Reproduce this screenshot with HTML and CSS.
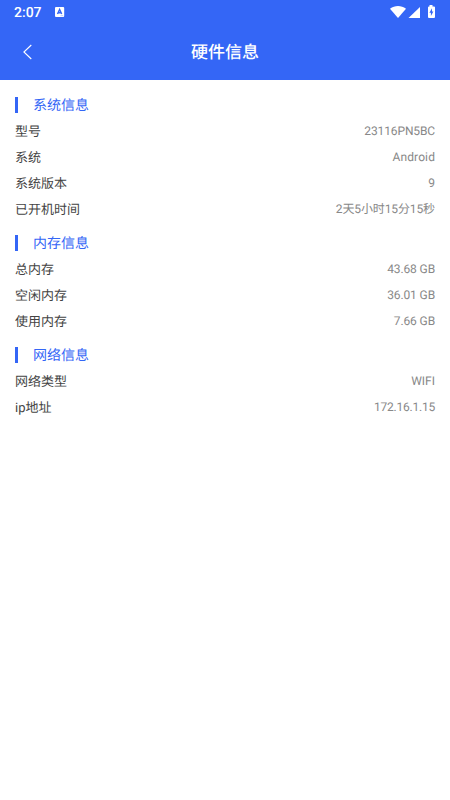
FILE: index.html
```html
<!DOCTYPE html>
<html lang="zh-CN">
<head>
<meta charset="utf-8">
<title>硬件信息</title>
<link rel="stylesheet" href="styles.css">
</head>
<body>
<header class="top">
  <div class="status">
    <span class="clock">2:07</span>
    <svg class="badge" width="10" height="10" viewBox="0 0 10 10"><rect width="9.2" height="10" rx="1" fill="#fff"/><path d="M2.5 7 4.6 2.5 6.7 7M3.3 5.7h2.6" fill="none" stroke="#3466f6" stroke-width="1.4"/><path d="M5.5 8.7h2.7" stroke="#a9bdfa" stroke-width=".8"/></svg>
    <svg class="signals" width="46" height="14" viewBox="0 0 46 14" fill="#fff"><path d="M0 3.7C4.8.1 11.2.1 16 3.7L8 13Z"/><path d="M30 2v11H18.5Z"/><path d="M39.5 1.5V0h3v1.5H44q1 0 1 1V12q0 1-1 1h-5q-1 0-1-1V2.5q0-1 1-1Z"/><path d="M42 3.2 39.4 7.8h1.5V11l2.5-4.6h-1.4Z" fill="#3466f6"/></svg>
  </div>
  <div class="nav">
    <svg class="back" width="10" height="16" viewBox="0 0 10 16"><path d="M8.3 1 .9 8l7.4 7" fill="none" stroke="#fff" stroke-width="1.1"/></svg>
    <h1>硬件信息</h1>
  </div>
</header>
<main>
  <section>
    <h2>系统信息</h2>
    <div class="row"><span>型号</span><b class="snug">23116PN5BC</b></div>
    <div class="row"><span>系统</span><b class="loose">Android</b></div>
    <div class="row"><span>系统版本</span><b>9</b></div>
    <div class="row"><span>已开机时间</span><b class="cjk snug">2天5小时15分15秒</b></div>
  </section>
  <section>
    <h2>内存信息</h2>
    <div class="row"><span>总内存</span><b class="snug">43.68 GB</b></div>
    <div class="row"><span>空闲内存</span><b class="snug">36.01 GB</b></div>
    <div class="row"><span>使用内存</span><b class="snug">7.66 GB</b></div>
  </section>
  <section>
    <h2>网络信息</h2>
    <div class="row"><span>网络类型</span><b>WIFI</b></div>
    <div class="row"><span>ip地址</span><b class="tight">172.16.1.15</b></div>
  </section>
</main>
</body>
</html>
```
FILE: styles.css
```css
* { box-sizing: border-box; }
body { margin: 0; background: #fff; font-family: Roboto, "Noto Sans CJK SC", sans-serif; text-rendering: geometricPrecision; }
.top { height: 80px; background: #3466f6; color: #fff; }
.status { height: 24px; display: flex; align-items: center; padding: 0 14px; }
.clock { font-size: 14px; line-height: 24px; width: 41px; padding-top: 1px; font-weight: 500; }
.signals { margin-left: auto; }
.nav { height: 56px; display: grid; grid-template-columns: 40px 1fr 40px; align-items: center; }
.back { margin-left: 23px; }
h1 { margin: 0; padding-top: 2px; font-size: 17px; line-height: 24px; font-weight: 500; text-align: center; }
main { padding: 10px 15px 0; }
section { margin-bottom: 6px; }
h2 { margin: 0; height: 28px; padding-top: 1px; display: flex; align-items: center; gap: 15px; font-size: 14px; font-weight: 400; color: #3466f6; }
h2::before { content: ""; width: 3px; height: 16px; background: #3466f6; }
.row { height: 26px; display: flex; justify-content: space-between; align-items: center; font-size: 13px; color: #444; }
.row span, .row .cjk { padding-bottom: 2px; }
.row b { font-size: 12px; font-weight: 400; color: #888; }
.row .snug { letter-spacing: -0.12px; }
.row .loose { letter-spacing: 0.1px; }
.row .tight { letter-spacing: -0.22px; }
```
